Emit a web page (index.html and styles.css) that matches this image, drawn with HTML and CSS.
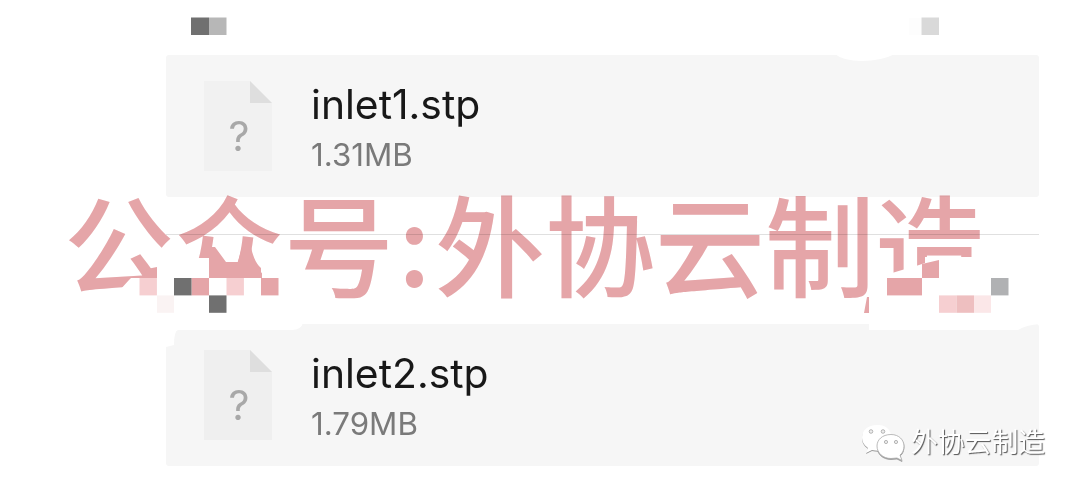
FILE: index.html
```
<!DOCTYPE html>
<html lang="zh-CN">
<head>
    <meta charset="UTF-8">
    <title>外协云制造</title>
    <link rel="stylesheet" href="styles.css">
</head>
<body>
    <div class="chat">
        <div class="file-card first">
            <svg class="file-icon" viewBox="0 0 68 90">
                <path fill="#f1f1f1" d="M0 0H46L68 22V90H0Z"/>
                <path fill="#dedede" d="M46 0L68 22H46Z"/>
                <text x="35" y="70" text-anchor="middle">?</text>
            </svg>
            <div class="file-info">
                <div class="file-name">inlet1.stp</div>
                <div class="file-size">1.31MB</div>
            </div>
        </div>
        <div class="divider"></div>
        <div class="file-card">
            <svg class="file-icon" viewBox="0 0 68 90">
                <path fill="#efefef" d="M0 0H46L68 22V90H0Z"/>
                <path fill="#dedede" d="M46 0L68 22H46Z"/>
                <text x="35" y="70" text-anchor="middle">?</text>
            </svg>
            <div class="file-info">
                <div class="file-name">inlet2.stp</div>
                <div class="file-size">1.79MB</div>
            </div>
        </div>
    </div>

    <div class="watermark">公众号<span class="colon">:</span>外协云制造</div>

    <!-- erased spots and mosaic over names -->
    <svg class="mosaic" viewBox="0 0 1080 492">
        <g fill="#fff">
            <path d="M835 54Q843 61 862 61T895 54Z"/>
            <path d="M157 256L174 254V320H157ZM129 280L119 291V305H157V278H131Z"/>
            <path d="M174 258H209V278H285V313H174Z"/>
            <path d="M252 247L262 268V280H284V247Z"/>
            <path d="M160 323H303Q301 330 292 330H178Q174 331 174 345L166 347H160Z"/>
            <path d="M869 318H1040V324Q1026 325 1018 330H869Z"/>
            <path d="M880 277L892 273L902 270L916 266L925 263V257H1000V313H869V296Z"/>
        </g>
        <g fill="#e5a5a8">
            <path d="M209 247H215L226 262H238L242 247H251Q254 262 261 268V278H209Z"/>
            <path d="M147 269L157 267V278H143Z"/>
            <rect x="191.500" y="278" width="17.500" height="17.400"/>
            <rect x="261" y="278" width="17.500" height="17.400"/>
            <path d="M922 264L939 260V278H922Z"/>
            <rect x="887" y="278" width="35" height="17.400"/>
            <path d="M864 313L867 297H869V313Z"/>
        </g>
        <g fill="#f6cfd1">
            <rect x="139.500" y="278" width="17.400" height="17.400"/>
            <rect x="226.500" y="278" width="17.400" height="17.400"/>
            <rect x="939" y="295.400" width="17.500" height="17.400"/>
        </g>
        <rect x="956.500" y="295.400" width="17.500" height="17.400" fill="#eebfc0"/>
        <rect x="974" y="295.400" width="17" height="17.400" fill="#fbe7e8"/>
        <rect x="157" y="295.400" width="17" height="17.400" fill="#faf3f3"/>
        <g fill="#707070">
            <rect x="191" y="17.500" width="18" height="17.500"/>
            <rect x="174" y="278" width="17.500" height="17.400"/>
            <rect x="209" y="295.400" width="17.500" height="17.400"/>
        </g>
        <rect x="209" y="17.500" width="17.500" height="17.500" fill="#b7b7b7"/>
        <rect x="909" y="18" width="12.500" height="17" fill="#fdfdfd"/>
        <rect x="921.500" y="17.500" width="17.500" height="17.500" fill="#d9d9d9"/>
        <rect x="991" y="278" width="17.500" height="17.400" fill="#b0b1b3"/>
    </svg>

    <div class="account">
        <svg class="wechat" viewBox="0 0 44 38">
            <path d="M16 1C7 1 1 6 1 13C1 18 3 21 7 24L5 29L11 26C16 27 22 27 25 25C32 20 33 13 28 6C25 2 21 1 16 1Z"/>
            <path class="front" d="M30 10.500C21 10.500 16 16 16 22C16 29 22 34.500 30 34.500C32 34.500 34 34 36 34L41 36.500L39 31C42 29 43 25 43 22C43 16 38 10.500 30 10.500Z"/>
            <g class="eyes">
                <circle cx="10" cy="7.500" r="1.800"/>
                <circle cx="22" cy="7.500" r="1.800"/>
                <circle cx="25" cy="18" r="1.600"/>
                <circle cx="35" cy="18" r="1.600"/>
            </g>
        </svg>
        <span>外协云制造</span>
    </div>
</body>
</html>
```

FILE: styles.css
```
* {
    margin: 0;
    padding: 0;
    box-sizing: border-box;
}

body {
    position: relative;
    width: 1080px;
    height: 492px;
    overflow: hidden;
    background: #fff;
    font-family: Inter, 'Noto Sans CJK SC', sans-serif;
}

.chat {
    width: 873px;
    margin-left: 166px;
    padding-top: 55px;
}

.file-card {
    display: flex;
    align-items: flex-start;
    height: 142px;
    padding: 26px 38px;
    border-radius: 3px;
    background: #f6f6f6;
}

.file-icon {
    flex: none;
    width: 68px;
    height: 90px;
}

.file-icon text {
    font-size: 41px;
    fill: #a8a8a8;
}

.file-info {
    margin-left: 39px;
}

.file-name {
    height: 50px;
    line-height: 46px;
    font-size: 40.8px;
    color: #181818;
}

.file-size {
    line-height: 48px;
    font-size: 31.3px;
    color: #7a7a7a;
}

.divider {
    height: 1px;
    margin: 37px 0 89px;
    background: #e0e0e0;
}

.watermark {
    position: absolute;
    left: 64px;
    top: 186px;
    line-height: 110px;
    font-family: 'Noto Sans CJK SC', sans-serif;
    font-size: 110px;
    font-weight: 500;
    white-space: nowrap;
    color: #e5a5a8;
    mix-blend-mode: multiply;
}

.colon {
    position: relative;
    top: -3px;
    display: inline-block;
    width: 41px;
    text-align: center;
}

.mosaic {
    position: absolute;
    left: 0;
    top: 0;
    width: 1080px;
    height: 492px;
}

.account {
    position: absolute;
    left: 861px;
    top: 424px;
    display: flex;
    align-items: center;
    gap: 6px;
    height: 38px;
    font-family: 'Noto Sans CJK SC', sans-serif;
    font-size: 26.8px;
    line-height: 36px;
    color: #fff;
    text-shadow: 1px 1px 1px #555;
}

.account span {
    margin-top: -4px;
}

.wechat {
    width: 44px;
    height: 38px;
    overflow: visible;
    fill: #fff;
    filter: drop-shadow(0 1px 0.5px #999);
}

.front {
    stroke: #aaa;
    stroke-width: 0.8;
}

.eyes {
    fill: #eee;
    stroke: #999;
    stroke-width: 0.7;
}
```
